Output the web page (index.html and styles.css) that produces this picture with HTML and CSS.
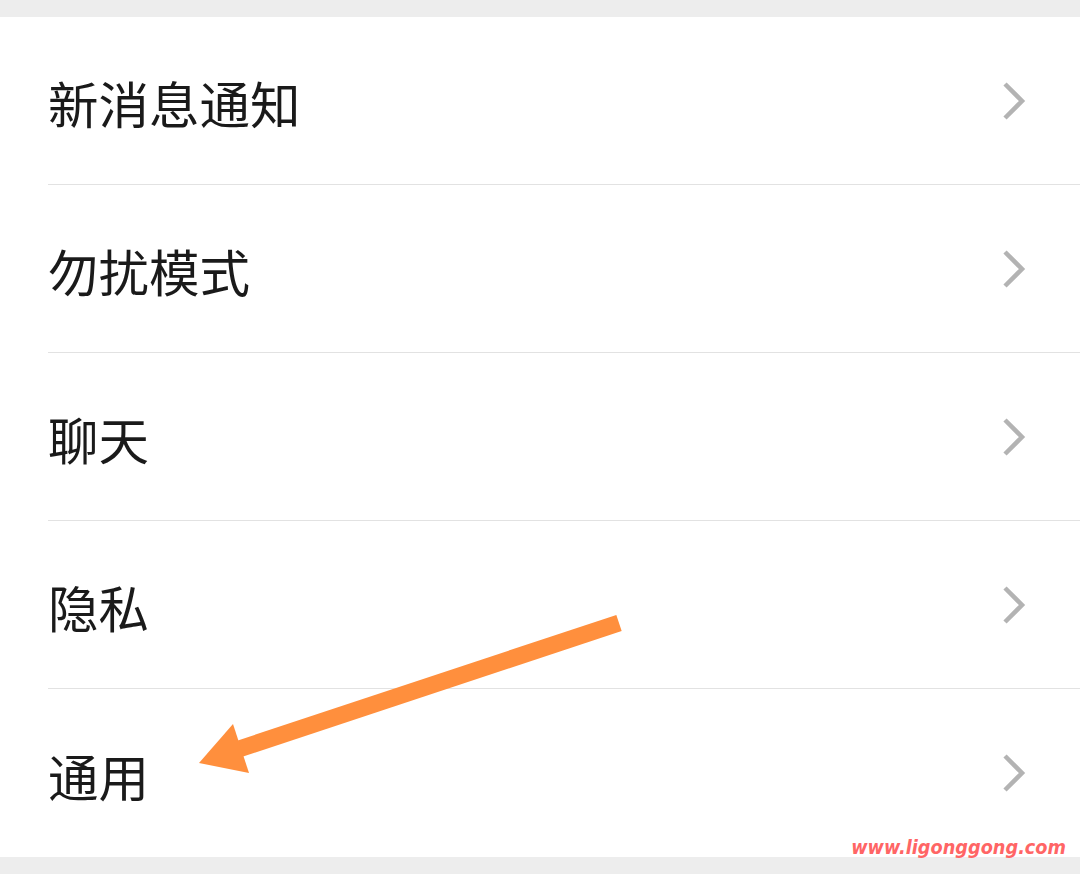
FILE: index.html
```html
<!DOCTYPE html>
<html lang="zh-CN">
<head>
  <meta charset="UTF-8" />
  <title>设置</title>
  <link rel="stylesheet" href="styles.css">
</head>
<body>
  <div class="page">
    <ul class="menu">
      <li class="item"><span class="label">新消息通知</span><svg class="chev" viewBox="0 0 24 40"><path d="M3 3 L20 20 L3 37"/></svg></li>
      <li class="item"><span class="label">勿扰模式</span><svg class="chev" viewBox="0 0 24 40"><path d="M3 3 L20 20 L3 37"/></svg></li>
      <li class="item"><span class="label">聊天</span><svg class="chev" viewBox="0 0 24 40"><path d="M3 3 L20 20 L3 37"/></svg></li>
      <li class="item"><span class="label">隐私</span><svg class="chev" viewBox="0 0 24 40"><path d="M3 3 L20 20 L3 37"/></svg></li>
      <li class="item"><span class="label">通用</span><svg class="chev" viewBox="0 0 24 40"><path d="M3 3 L20 20 L3 37"/></svg></li>
    </ul>

    <svg class="pointer" width="1080" height="874" viewBox="0 0 1080 874">
      <line x1="619" y1="623" x2="236" y2="750" stroke="#ff8f3d" stroke-width="17"/>
      <polygon points="199,763 233,724 249,773" fill="#ff8f3d"/>
    </svg>

    <div class="mark">www.ligonggong.com</div>
  </div>
</body>
</html>
```

FILE: styles.css
```css
* { box-sizing: border-box; }
body {
  margin: 0;
  background: #ededed;
  font-family: "Noto Sans CJK SC", "Noto Sans", sans-serif;
}
.page {
  position: relative;
  width: 1080px;
  height: 874px;
  padding-top: 17px;
  overflow: hidden;
}
.menu {
  list-style: none;
  margin: 0;
  padding: 0 0 0 48px;
  background: #fff;
}
.item {
  height: 168px;
  display: flex;
  align-items: center;
  justify-content: space-between;
  padding-right: 54px;
  border-bottom: 1px solid #e2e2e2;
}
.item:last-child { border-bottom: none; }
.label {
  font-size: 50.5px;
  color: #1a1a1a;
  line-height: 1;
  margin-top: 4px;
}
.chev {
  width: 24px;
  height: 40px;
}
.chev path {
  fill: none;
  stroke: #b3b3b3;
  stroke-width: 4.5;
}
.pointer {
  position: absolute;
  left: 0;
  top: 0;
}
.mark {
  position: absolute;
  right: 14px;
  top: 836px;
  font-family: "DejaVu Sans Condensed", "DejaVu Sans", sans-serif;
  font-stretch: condensed;
  font-weight: bold;
  font-style: italic;
  font-size: 19.7px;
  color: #ff6565;
}
```
